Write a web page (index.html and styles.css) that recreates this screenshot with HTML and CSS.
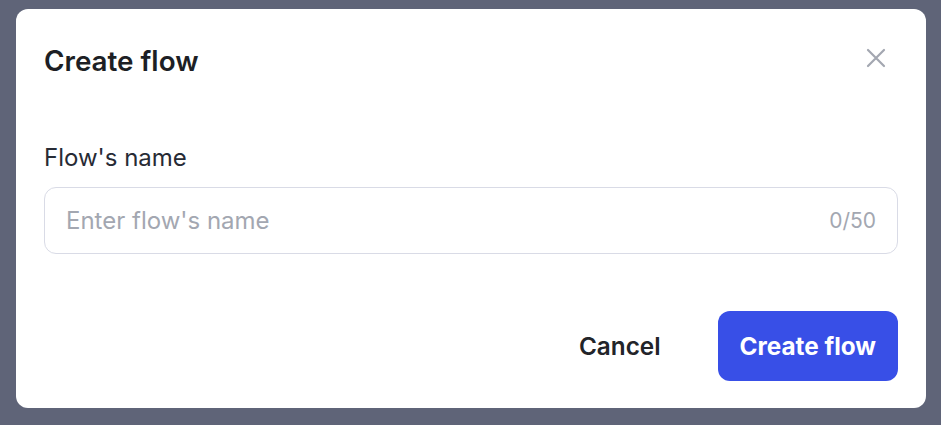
FILE: index.html
```html
<!DOCTYPE html>
<html>
<head>
<meta charset="utf-8">
<link rel="stylesheet" href="styles.css">
</head>
<body>
<div class="overlay">
  <div class="modal">
    <div class="modal-header">
      <h2 class="modal-title">Create flow</h2>
      <button class="close-btn" aria-label="Close">
        <svg width="20" height="20" viewBox="0 0 20 20"><path d="M2 2 L18 18 M18 2 L2 18" stroke="#a3a7b1" stroke-width="2.2" stroke-linecap="round" fill="none"/></svg>
      </button>
    </div>
    <div class="field">
      <label class="field-label">Flow's name</label>
      <div class="input-box">
        <span class="placeholder">Enter flow's name</span>
        <span class="counter">0/50</span>
      </div>
    </div>
    <div class="actions">
      <button class="btn btn-cancel">Cancel</button>
      <button class="btn btn-primary">Create flow</button>
    </div>
  </div>
</div>
</body>
</html>
```
FILE: styles.css
```css
* { box-sizing: border-box; }
html, body { margin: 0; padding: 0; }
body {
  background: #5f6478;
  font-family: Inter, "Noto Sans", sans-serif;
  width: 941px;
  height: 425px;
  overflow: hidden;
}
.overlay {
  padding: 9px 15px 17px 16px;
}
.modal {
  width: 910px;
  height: 399px;
  background: #ffffff;
  border-radius: 12px;
  padding: 36px 28px 27px 28px;
  display: flex;
  flex-direction: column;
}
.modal-header {
  display: flex;
  justify-content: space-between;
  align-items: center;
  height: 32px;
}
.modal-title {
  margin: 0;
  font-size: 27.8px;
  font-weight: 600;
  line-height: 32px;
  color: #1d1f25;
}
.close-btn {
  border: none;
  background: none;
  padding: 0;
  width: 20px;
  height: 20px;
  margin-right: 12px;
  margin-top: -6px;
  display: flex;
}
.field {
  margin-top: 67px;
  display: flex;
  flex-direction: column;
}
.field-label {
  font-size: 24px;
  line-height: 28px;
  color: #272b35;
}
.input-box {
  margin-top: 15px;
  height: 67px;
  border: 1px solid #d9dbe6;
  border-radius: 12px;
  display: flex;
  align-items: center;
  justify-content: space-between;
  padding: 0 21px 0 21px;
}
.placeholder {
  font-size: 24px;
  color: #a3a7b1;
}
.counter {
  font-size: 21px;
  color: #a3a7b1;
}
.actions {
  margin-top: 57px;
  display: flex;
  justify-content: flex-end;
  align-items: center;
  gap: 33px;
}
.btn {
  font-family: inherit;
  border: none;
  height: 70px;
  border-radius: 12px;
  cursor: pointer;
}
.btn-cancel {
  background: none;
  color: #222429;
  font-size: 24.3px;
  font-weight: 600;
  padding: 0 24px;
}
.btn-primary {
  background: #384fe7;
  color: #ffffff;
  font-size: 24.3px;
  font-weight: 700;
  padding: 0 22px;
}
```
